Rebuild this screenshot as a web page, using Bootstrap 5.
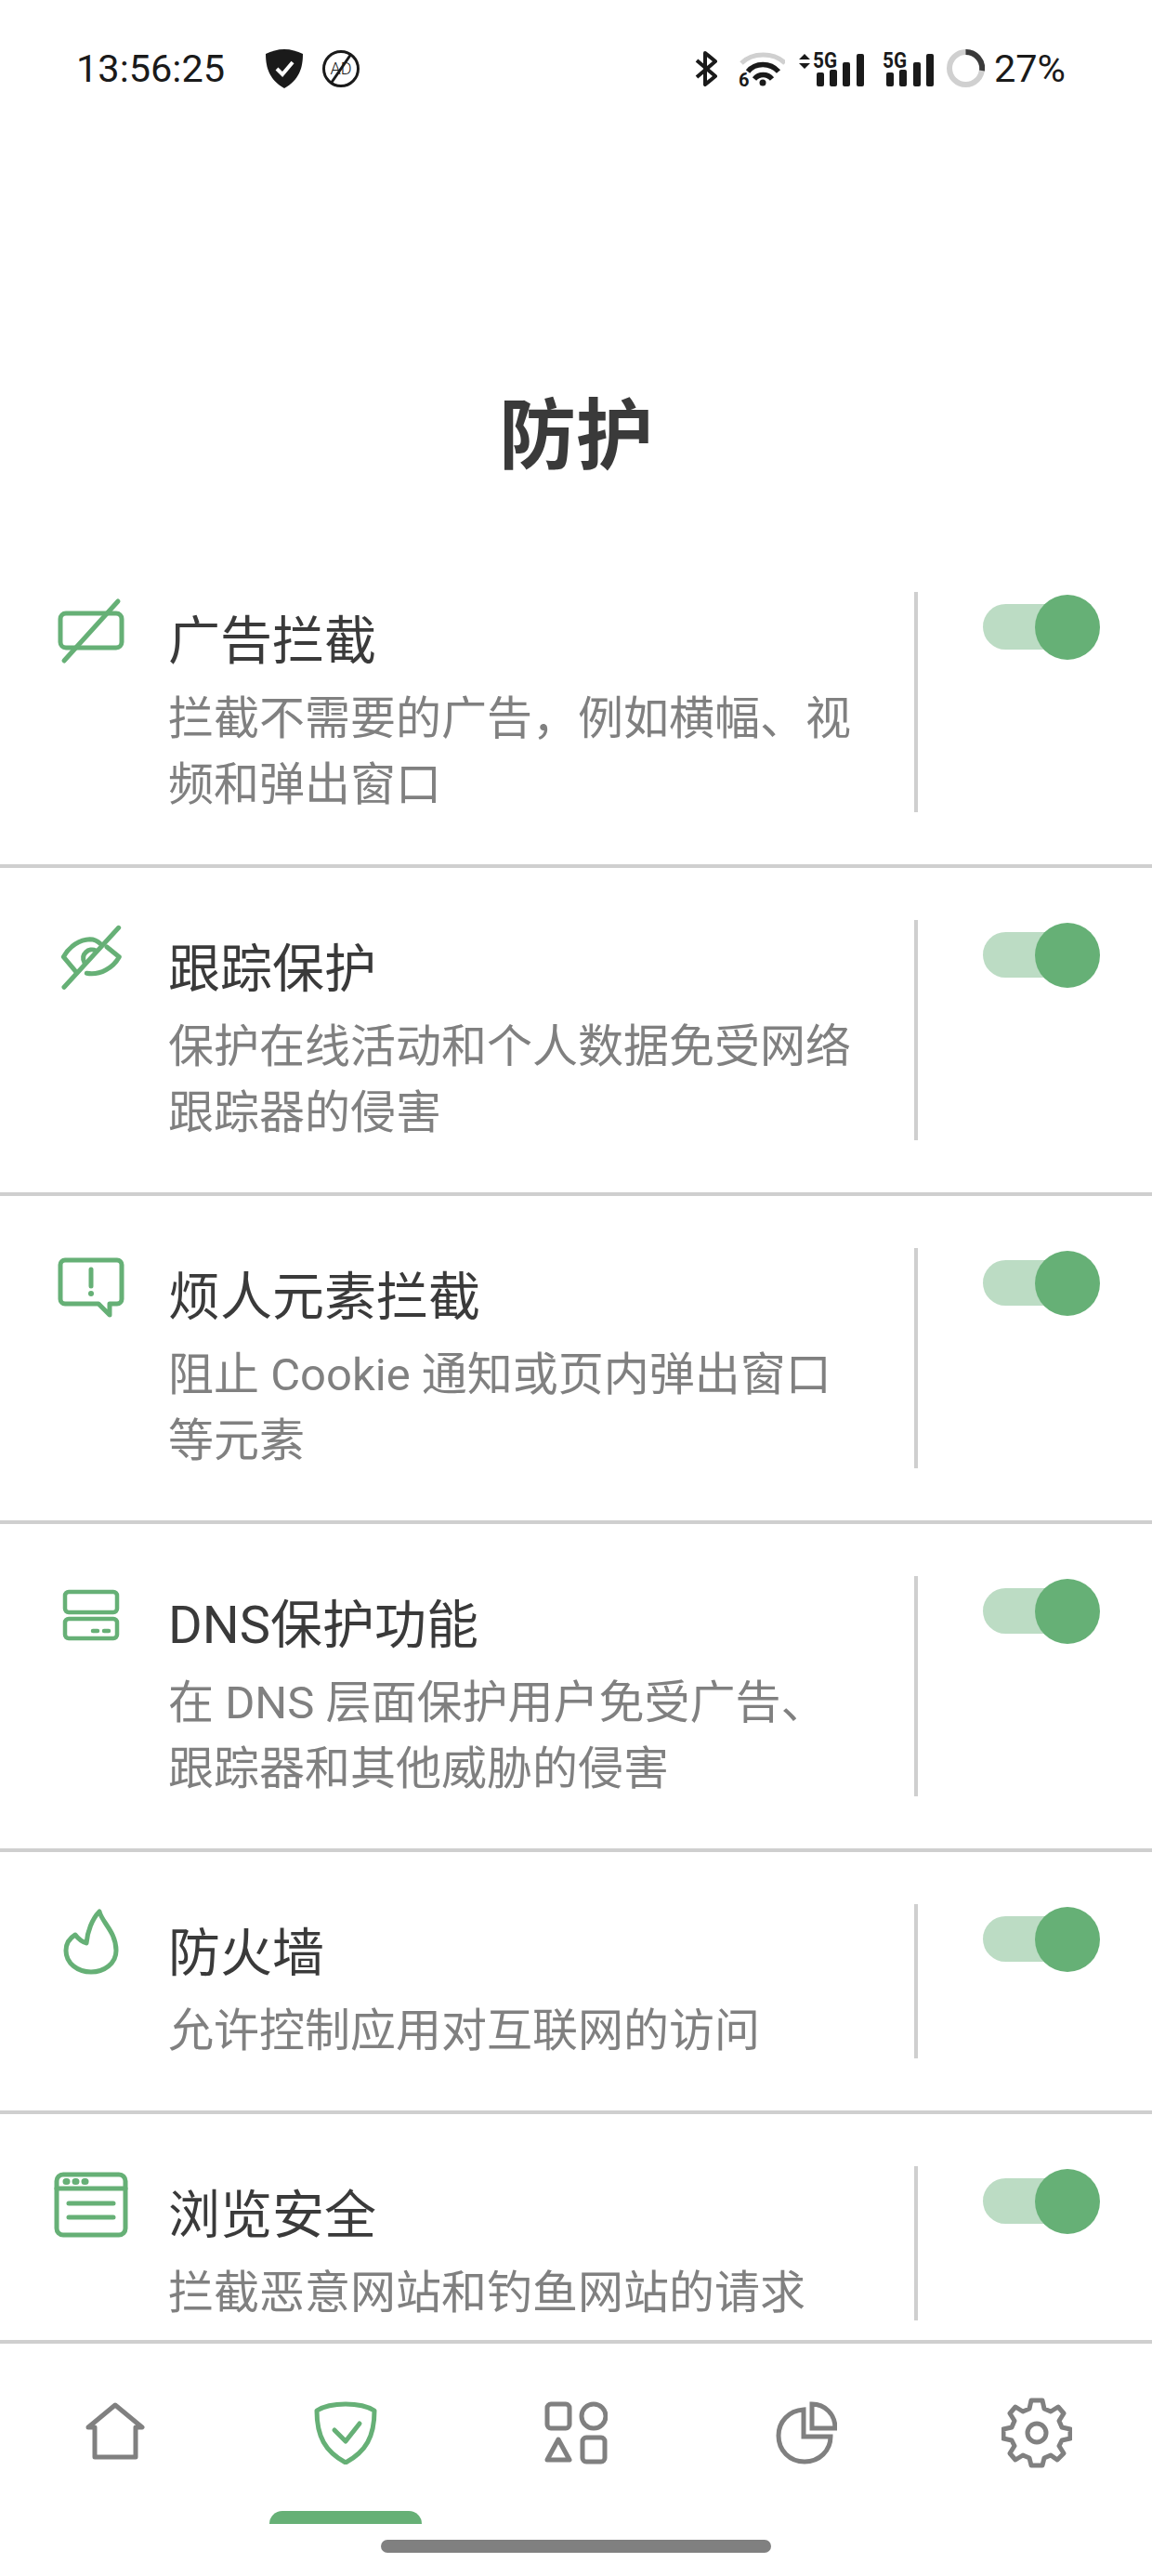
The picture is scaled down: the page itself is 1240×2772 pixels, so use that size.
<!DOCTYPE html>
<html lang="zh-CN">
<head>
    <meta charset="UTF-8">
    <meta name="viewport" content="width=device-width, initial-scale=1.0">
    <title>防护</title>
    <link href="https://cdn.jsdelivr.net/npm/bootstrap@5.3.0/dist/css/bootstrap.min.css" rel="stylesheet">
    <style>
        body { font-family: Roboto, "Noto Sans CJK SC", sans-serif; background: #fff; }
        .phone { width: 1240px; height: 2772px; overflow: hidden; }
        .status-bar { height: 144px; padding: 3px 93px 0 82px; color: #1a1a1a; }
        .status-text { font-size: 41.500px; line-height: 1; }
        .status-bar svg { display: block; flex: none; }
        .st-shield { margin-left: 44px; }
        .st-ad { margin-left: 21px; }
        .st-wifi { margin-left: 20px; }
        .st-sig1 { margin-left: 15px; }
        .st-sig2 { margin-left: 20px; }
        .st-ring { margin-left: 14px; margin-right: 10px; }
        .page-title { font-size: 83px; line-height: 100px; font-weight: 700; color: #3a3a3a; padding-top: 276px; height: 437px; margin: 0; }
        .prot-list { min-height: 0; }
        .prot-list .prot-row { padding: 56px 0 56px 58px; border-width: 0 0 4px; border-style: solid; border-color: #cfcfcf; border-radius: 0; }
        .prot-icon { width: 80px; height: 80px; margin-top: 2px; margin-right: 43px; flex: none; }
        .prot-text { width: 803px; padding-top: 17px; padding-right: 46px; margin-bottom: -6px; flex: none; }
        .prot-name { font-size: 56px; line-height: 72px; color: #3a3a3a; margin: 0 0 12px; font-weight: 400; }
        .prot-desc { font-size: 49px; line-height: 71px; color: #808080; margin: 0; }
        .prot-switch { border-left: 4px solid #cfcfcf; width: 256px; flex: none; padding-left: 70px; }
        .switch-track { display: block; position: relative; width: 112px; height: 49px; margin-top: 13px; border-radius: 25px; background: #bcdcc4; }
        .switch-thumb { position: absolute; right: -14px; top: -10px; width: 70px; height: 70px; border-radius: 50%; background: #66b076; }
        .bottom-nav { height: 254px; border-top: 4px solid #cfcfcf; background: #fff; }
        .nav-cell { width: 248px; height: 194px; padding-top: 62px; }
        .nav-mark { position: absolute; left: 42px; bottom: 0; width: 164px; height: 14px; background: #66b076; border-radius: 14px 14px 0 0; }
        .nav-home { margin-top: 1px; }
        .nav-gear { margin-top: -4px; }
        .home-bar { width: 420px; height: 14px; background: #808080; border-radius: 7px; margin: 17px auto 0; }
    </style>
</head>
<body>
<div class="phone d-flex flex-column">

    <!-- status bar -->
    <div class="status-bar d-flex align-items-center flex-shrink-0">
        <span class="status-text">13:56:25</span>
        <svg class="st-shield" width="40" height="42" viewBox="0 0 40 42">
            <path d="M20 0C27 0 34 2 40 5C40 20 36 33 20 42C4 33 0 20 0 5C6 2 13 0 20 0Z" fill="#1a1a1a"/>
            <path d="M12 21L18 27L29 14" fill="none" stroke="#fff" stroke-width="4"/>
        </svg>
        <svg class="st-ad" width="40" height="40" viewBox="0 0 40 40">
            <circle cx="20" cy="20" r="18.500" fill="none" stroke="#1a1a1a" stroke-width="3"/>
            <path d="M9 36L31 4" stroke="#1a1a1a" stroke-width="3"/>
            <text x="20" y="26" text-anchor="middle" font-family="Roboto" font-weight="300" font-size="18" fill="#1a1a1a">AD</text>
        </svg>
        <div class="flex-grow-1"></div>
        <!-- bluetooth -->
        <svg width="25" height="38" viewBox="0 0 25 38">
            <path d="M2 10L22 27L11 36V2L22 11L2 28" fill="none" stroke="#1a1a1a" stroke-width="4" stroke-linejoin="round"/>
        </svg>
        <!-- wifi 6 -->
        <svg class="st-wifi" width="52" height="52" viewBox="-2 -6 52 52">
            <path d="M3 14C15 2 38 2 50 14" fill="none" stroke="#d0d0d0" stroke-width="5"/>
            <path d="M10 23C18 13 34 13 43 23" fill="none" stroke="#1a1a1a" stroke-width="5.500"/>
            <path d="M17 31C22 25 31 25 36 31" fill="none" stroke="#1a1a1a" stroke-width="5.500"/>
            <circle cx="26" cy="35" r="3.500" fill="#1a1a1a"/>
            <text x="0" y="39" font-family="Roboto" font-weight="700" font-size="20" fill="#1a1a1a">6</text>
        </svg>
        <!-- arrows + 5G signal -->
        <svg class="st-sig1" width="70" height="50" viewBox="0 -6 70 50">
            <path d="M0 9L6 3L12 9ZM0 13L6 19L12 13Z" fill="#1a1a1a"/>
            <text x="15" y="18" font-family="Roboto" font-weight="700" font-size="23" textLength="26" lengthAdjust="spacingAndGlyphs" fill="#1a1a1a">5G</text>
            <rect x="19" y="23" width="8" height="15" rx="2" fill="#1a1a1a"/>
            <rect x="33" y="20" width="8" height="18" rx="2" fill="#1a1a1a"/>
            <rect x="47" y="12" width="8" height="26" rx="2" fill="#1a1a1a"/>
            <rect x="62" y="3" width="8" height="35" rx="2" fill="#1a1a1a"/>
        </svg>
        <svg class="st-sig2" width="55" height="50" viewBox="0 -6 55 50">
            <text x="0" y="18" font-family="Roboto" font-weight="700" font-size="23" textLength="26" lengthAdjust="spacingAndGlyphs" fill="#1a1a1a">5G</text>
            <rect x="4" y="23" width="8" height="15" rx="2" fill="#1a1a1a"/>
            <rect x="18" y="20" width="8" height="18" rx="2" fill="#1a1a1a"/>
            <rect x="33" y="12" width="8" height="26" rx="2" fill="#1a1a1a"/>
            <rect x="47" y="3" width="8" height="35" rx="2" fill="#1a1a1a"/>
        </svg>
        <!-- battery ring -->
        <svg class="st-ring" width="41" height="41" viewBox="0 0 41 41">
            <circle cx="20.500" cy="20.500" r="17.500" fill="none" stroke="#d0d0d0" stroke-width="6"/>
            <path d="M20.500 3A17.500 17.500 0 0 1 38 23" fill="none" stroke="#3a3a3a" stroke-width="6"/>
        </svg>
        <span class="status-text">27%</span>
    </div>

    <h1 class="page-title text-center flex-shrink-0">防护</h1>

    <div class="prot-list list-group list-group-flush flex-grow-1 overflow-hidden">

        <div class="prot-row list-group-item d-flex">
            <svg class="prot-icon" viewBox="0 0 80 80" fill="none" stroke="#66b076" stroke-width="5" stroke-linecap="round" stroke-linejoin="round">
                <rect x="7" y="21" width="66" height="37" rx="6"/>
                <path d="M11 72L69 8"/>
            </svg>
            <div class="prot-text">
                <h2 class="prot-name">广告拦截</h2>
                <p class="prot-desc">拦截不需要的广告，例如横幅、视频和弹出窗口</p>
            </div>
            <div class="prot-switch"><span class="switch-track"><span class="switch-thumb"></span></span></div>
        </div>

        <div class="prot-row list-group-item d-flex">
            <svg class="prot-icon" viewBox="0 0 80 80" fill="none" stroke="#66b076" stroke-width="5" stroke-linecap="round" stroke-linejoin="round">
                <path d="M23.700 53.700L10.300 37.700C17 26 28 19 38.700 18.700C43 18.700 47 20.500 50.300 23.700"/>
                <path d="M57 27L70.300 37.700C64 49 50 58 35.300 55.300"/>
                <path d="M33 44C28 35 38 27 45 31"/>
                <path d="M11 70.300L69.700 6.300"/>
            </svg>
            <div class="prot-text">
                <h2 class="prot-name">跟踪保护</h2>
                <p class="prot-desc">保护在线活动和个人数据免受网络跟踪器的侵害</p>
            </div>
            <div class="prot-switch"><span class="switch-track"><span class="switch-thumb"></span></span></div>
        </div>

        <div class="prot-row list-group-item d-flex">
            <svg class="prot-icon" viewBox="0 0 80 80" fill="none" stroke="#66b076" stroke-width="5" stroke-linecap="round" stroke-linejoin="round">
                <path d="M12 11H68A5 5 0 0 1 73 16V53A5 5 0 0 1 68 58H60V70L48 58H12A5 5 0 0 1 7 53V16A5 5 0 0 1 12 11Z"/>
                <path d="M40 21V39"/>
                <path d="M40 47V47.100" stroke-width="6"/>
            </svg>
            <div class="prot-text">
                <h2 class="prot-name">烦人元素拦截</h2>
                <p class="prot-desc">阻止 Cookie 通知或页内弹出窗口等元素</p>
            </div>
            <div class="prot-switch"><span class="switch-track"><span class="switch-thumb"></span></span></div>
        </div>

        <div class="prot-row list-group-item d-flex">
            <svg class="prot-icon" viewBox="0 0 80 80" fill="none" stroke="#66b076" stroke-width="4.500" stroke-linecap="round" stroke-linejoin="round">
                <rect x="12" y="15" width="56" height="22" rx="4"/>
                <rect x="12" y="44" width="56" height="21" rx="4"/>
                <path d="M42 57H47M54 57H59"/>
            </svg>
            <div class="prot-text">
                <h2 class="prot-name">DNS保护功能</h2>
                <p class="prot-desc">在 DNS 层面保护用户免受广告、跟踪器和其他威胁的侵害</p>
            </div>
            <div class="prot-switch"><span class="switch-track"><span class="switch-thumb"></span></span></div>
        </div>

        <div class="prot-row list-group-item d-flex">
            <svg class="prot-icon" viewBox="0 0 80 80" fill="none" stroke="#66b076" stroke-width="5" stroke-linecap="round" stroke-linejoin="round">
                <path d="M49 6C52 18 67 28 67 48C67 62 54 71 40 71C26 71 13 62 13 48C13 40 18 34 23 31C26 35 29 38 35 40C36 28 41 14 49 6Z"/>
            </svg>
            <div class="prot-text">
                <h2 class="prot-name">防火墙</h2>
                <p class="prot-desc">允许控制应用对互联网的访问</p>
            </div>
            <div class="prot-switch"><span class="switch-track"><span class="switch-thumb"></span></span></div>
        </div>

        <div class="prot-row list-group-item d-flex">
            <svg class="prot-icon" viewBox="0 0 80 80" fill="none" stroke="#66b076" stroke-width="5" stroke-linecap="round" stroke-linejoin="round">
                <rect x="3" y="7" width="74" height="65" rx="7"/>
                <path d="M3 22H77M16 38H64M16 53H64"/>
                <path d="M13 14.500H14M23 14.500H24M33 14.500H34" stroke-width="7"/>
            </svg>
            <div class="prot-text">
                <h2 class="prot-name">浏览安全</h2>
                <p class="prot-desc">拦截恶意网站和钓鱼网站的请求</p>
            </div>
            <div class="prot-switch"><span class="switch-track"><span class="switch-thumb"></span></span></div>
        </div>
    </div>

    <!-- bottom navigation -->
    <div class="bottom-nav flex-shrink-0">
        <div class="d-flex">
            <div class="nav-cell position-relative d-flex justify-content-center align-items-start">
                <svg class="nav-home" width="64" height="62" viewBox="0 0 64 62" fill="none" stroke="#808080" stroke-width="5" stroke-linejoin="round" stroke-linecap="round">
                    <path d="M3 27L32 3L61 27H54V59H10V27Z"/>
                </svg>
            </div>
            <div class="nav-cell position-relative d-flex justify-content-center align-items-start">
                <svg width="68" height="68" viewBox="0 0 68 68" fill="none" stroke="#66b076" stroke-width="5" stroke-linejoin="round" stroke-linecap="round">
                    <path d="M34 3C46 3 57 5 65 10C65 38 56 54 34 66C12 54 3 38 3 10C11 5 22 3 34 3Z"/>
                    <path d="M22 31L34 43L49 24"/>
                </svg>
                <span class="nav-mark"></span>
            </div>
            <div class="nav-cell position-relative d-flex justify-content-center align-items-start">
                <svg width="68" height="68" viewBox="0 0 68 68" fill="none" stroke="#808080" stroke-width="5" stroke-linejoin="round">
                    <rect x="3" y="3" width="24" height="26" rx="4"/>
                    <circle cx="53" cy="16" r="13"/>
                    <path d="M15 41L27 63H3Z"/>
                    <rect x="41" y="39" width="24" height="26" rx="4"/>
                </svg>
            </div>
            <div class="nav-cell position-relative d-flex justify-content-center align-items-start">
                <svg width="66" height="68" viewBox="0 0 66 68" fill="none" stroke="#808080" stroke-width="5">
                    <path d="M30 9C14 10 3 22 3 37C3 53 15 65 31 65C47 65 59 53 59 38H30Z"/>
                    <path d="M39 3V29H64C64 14 53 3 39 3Z"/>
                </svg>
            </div>
            <div class="nav-cell position-relative d-flex justify-content-center align-items-start">
                <svg class="nav-gear" width="76" height="76" viewBox="0 0 76 76" fill="none" stroke="#808080" stroke-width="5" stroke-linejoin="round">
                    <path d="M32 3H44L46 12L53 15L61 10L67 17L62 25L65 32L74 34V44L65 46L62 52L67 60L60 67L53 62L46 65L44 73H32L30 65L23 62L15 67L9 60L14 52L11 46L2 44V34L11 32L14 25L9 17L15 10L23 15L30 12Z"/>
                    <circle cx="38" cy="38" r="10"/>
                </svg>
            </div>
        </div>
        <div class="home-bar"></div>
    </div>
</div>
</body>
</html>
